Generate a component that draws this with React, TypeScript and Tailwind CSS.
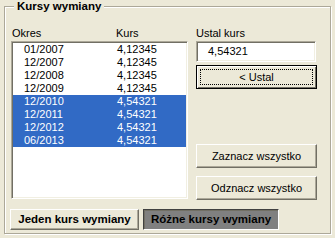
import React from "react";

const rows: { okres: string; kurs: string; sel: boolean }[] = [
  { okres: "01/2007", kurs: "4,12345", sel: false },
  { okres: "12/2007", kurs: "4,12345", sel: false },
  { okres: "12/2008", kurs: "4,12345", sel: false },
  { okres: "12/2009", kurs: "4,12345", sel: false },
  { okres: "12/2010", kurs: "4,54321", sel: true },
  { okres: "12/2011", kurs: "4,54321", sel: true },
  { okres: "12/2012", kurs: "4,54321", sel: true },
  { okres: "06/2013", kurs: "4,54321", sel: true },
];

const raised =
  "border border-t-white border-l-white border-r-[#716F64] border-b-[#716F64] shadow-[inset_-1px_-1px_0_#ACA899] bg-[#ECE9D8]";

export default function App() {
  return (
    <div className="w-[335px] h-[238px] bg-[#ECE9D8] pt-[6px] pl-[4px] font-['Liberation_Sans',Arial,sans-serif] text-[11px] text-black select-none">
      <div className="relative w-[327px] h-[228px] border border-[#ACA899] shadow-[inset_1px_1px_0_#fff,1px_1px_0_#fff]">
        <div className="absolute left-[9px] top-[-7px] px-[3px] bg-[#ECE9D8] font-bold text-[11.5px] leading-[13px]">
          Kursy wymiany
        </div>
        <div className="flex flex-col pt-[20px]">
          <div className="flex pl-[6px] gap-[8px]">
            {/* Left column */}
            <div className="w-[177px] flex flex-col">
              <div className="flex h-[13px] leading-[13px] pl-[1px]">
                <span className="w-[104px]">Okres</span>
                <span>Kurs</span>
              </div>
              <div className="mt-[1px] h-[158px] bg-white border border-t-[#ACA899] border-l-[#ACA899] border-r-white border-b-white shadow-[inset_1px_1px_0_#716F64,inset_-1px_-1px_0_#F1EFE2] pt-[1px] pl-[1px] pr-[1px]">
                {rows.map((r) => (
                  <div
                    key={r.okres}
                    className={
                      r.sel
                        ? "flex h-[13px] leading-[13px] bg-[#316AC5] text-white"
                        : "flex h-[13px] leading-[13px]"
                    }
                  >
                    <span className="w-[104px] pl-[11px]">{r.okres}</span>
                    <span>{r.kurs}</span>
                  </div>
                ))}
              </div>
            </div>
            {/* Right column */}
            <div className="w-[121px] flex flex-col">
              <div className="h-[13px] leading-[13px]">Ustal kurs</div>
              <div className="mt-[1px] w-[120px] h-[21px] flex items-center bg-white border border-t-[#ACA899] border-l-[#ACA899] border-r-white border-b-white shadow-[inset_1px_1px_0_#716F64,inset_-1px_-1px_0_#F1EFE2] pl-[11px]">
                4,54321
              </div>
              <div className="relative mt-[3px] w-[121px] h-[24px] flex items-center justify-center bg-[#ECE9D8] border border-black shadow-[inset_1px_1px_0_#fff,inset_-1px_-1px_0_#716F64]">
                <span>&lt; Ustal</span>
                <div className="absolute inset-[3px] border border-dotted border-black" />
              </div>
              <div className={`mt-[55px] w-[121px] h-[24px] flex items-center justify-center ${raised}`}>
                Zaznacz wszystko
              </div>
              <div className={`mt-[8px] w-[121px] h-[24px] flex items-center justify-center ${raised}`}>
                Odznacz wszystko
              </div>
            </div>
          </div>
          <div className="flex pl-[5px] gap-[4px] mt-[9px]">
            <div className={`w-[129px] h-[21px] flex items-center justify-center font-bold text-[11.5px] ${raised}`}>
              Jeden kurs wymiany
            </div>
            <div className="w-[136px] h-[21px] flex items-center justify-center font-bold text-[11.5px] bg-[#808080] border border-t-[#404040] border-l-[#404040] border-r-white border-b-white shadow-[inset_1px_1px_0_#716F64]">
              Różne kursy wymiany
            </div>
          </div>
        </div>
      </div>
    </div>
  );
}
